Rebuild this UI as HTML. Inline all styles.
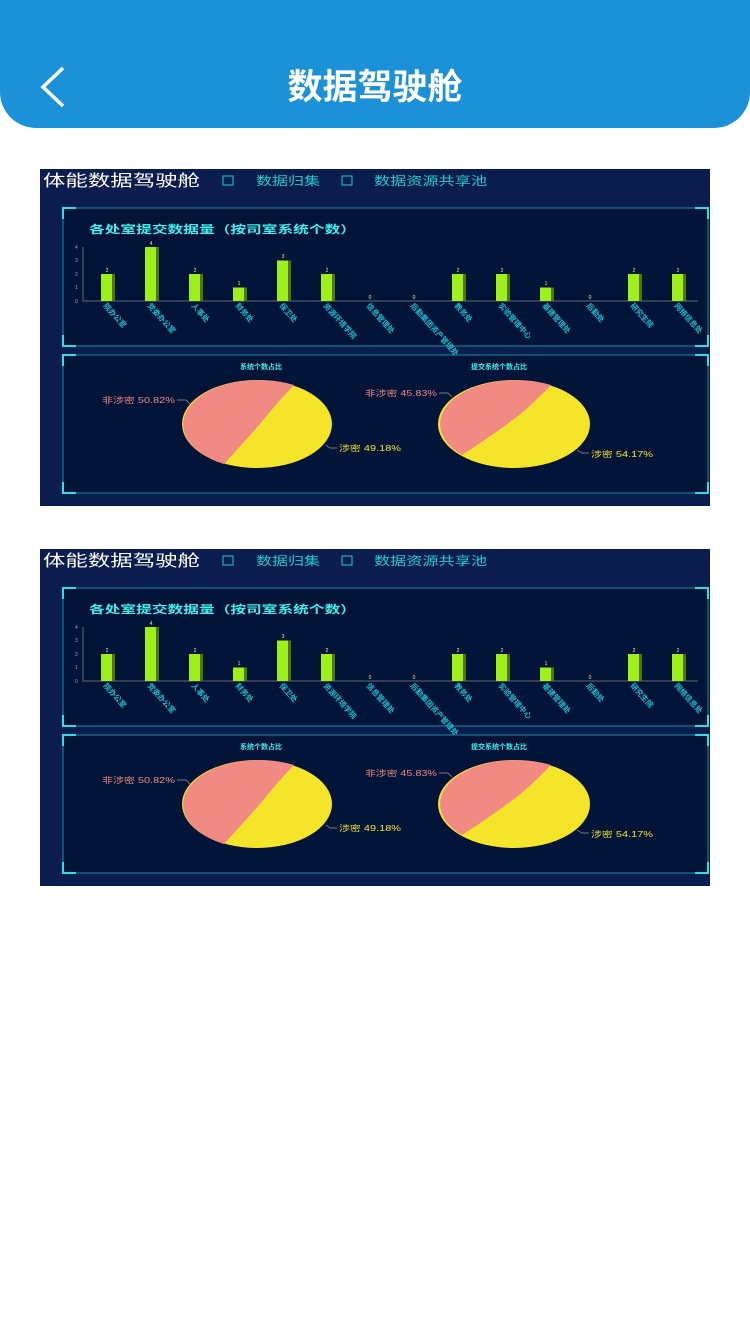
<!DOCTYPE html>
<html><head><meta charset="utf-8"><style>
body{margin:0;width:750px;height:1334px;background:#fff;position:relative;overflow:hidden;font-family:"Liberation Sans","Noto Sans CJK SC",sans-serif}
.hd{position:absolute;left:0;top:0;width:750px;height:128px;background:#1b92d8;border-radius:0 0 36px 36px}
.hd h1{position:absolute;left:0;right:0;top:64px;margin:0;text-align:center;color:#fff;font-size:35px;font-weight:bold;line-height:48px}
.img{position:absolute;left:40px;width:670px;height:337px}
svg text{font-family:"Liberation Sans","Noto Sans CJK SC",sans-serif}
</style></head><body>
<div class="hd"><svg style="position:absolute;left:36px;top:64px" width="32" height="46"><path d="M27 4 L7 23 L27 42" stroke="#fff" stroke-width="3.5" fill="none"/></svg><h1>数据驾驶舱</h1></div>

<div class="img" style="top:169px">
<svg width="670" height="337" viewBox="0 0 670 337">
<rect width="670" height="337" fill="#0a1d4e"/>
<text x="3" y="17" fill="#fff" font-size="16" textLength="157" lengthAdjust="spacingAndGlyphs">体能数据驾驶舱</text>
<rect x="183" y="7" width="10" height="9" fill="none" stroke="#2cc" stroke-width="1"/>
<text x="216" y="16" fill="#2cc" font-size="12" textLength="64" lengthAdjust="spacingAndGlyphs">数据归集</text>
<rect x="302" y="7" width="10" height="9" fill="none" stroke="#2cc" stroke-width="1"/>
<text x="334" y="16" fill="#2cc" font-size="12" textLength="113" lengthAdjust="spacingAndGlyphs">数据资源共享池</text>
<rect x="23" y="39" width="645" height="138" fill="#021438" stroke="#1a8aa0" stroke-width="1"/>
<path d="M23 50V39H36M655 39H668V50M23 166V177H36M655 177H668V166" stroke="#3dd" stroke-width="2" fill="none"/>
<text x="49" y="64" fill="#4ee" font-size="11" font-weight="bold" textLength="267" lengthAdjust="spacingAndGlyphs">各处室提交数据量（按司室系统个数）</text>
<g fill="#8ac" font-size="5"><text x="35" y="134">0</text><text x="35" y="120">1</text><text x="35" y="107">2</text><text x="35" y="93">3</text><text x="35" y="80">4</text></g>
<path d="M43 78V132H658" stroke="#667" stroke-width="1" fill="none"/>
<g fill="#9ef01a"><rect x="61" y="105" width="11" height="27"/><rect x="105" y="78" width="11" height="54"/><rect x="149" y="105" width="11" height="27"/><rect x="193" y="118.5" width="11" height="13.5"/><rect x="237" y="91.5" width="11" height="40.5"/><rect x="281" y="105" width="11" height="27"/><rect x="412" y="105" width="11" height="27"/><rect x="456" y="105" width="11" height="27"/><rect x="500" y="118.5" width="11" height="13.5"/><rect x="588" y="105" width="11" height="27"/><rect x="632" y="105" width="11" height="27"/></g>
<g fill="#4a7a10"><rect x="72" y="105" width="3" height="27"/><rect x="116" y="78" width="3" height="54"/><rect x="160" y="105" width="3" height="27"/><rect x="204" y="118.5" width="3" height="13.5"/><rect x="248" y="91.5" width="3" height="40.5"/><rect x="292" y="105" width="3" height="27"/><rect x="423" y="105" width="3" height="27"/><rect x="467" y="105" width="3" height="27"/><rect x="511" y="118.5" width="3" height="13.5"/><rect x="599" y="105" width="3" height="27"/><rect x="643" y="105" width="3" height="27"/></g>
<g fill="#cf8" font-size="5" text-anchor="middle"><text x="67" y="103">2</text><text x="111" y="76">4</text><text x="155" y="103">2</text><text x="199" y="116">1</text><text x="243" y="89">3</text><text x="287" y="103">2</text><text x="330" y="130">0</text><text x="374" y="130">0</text><text x="418" y="103">2</text><text x="462" y="103">2</text><text x="506" y="116">1</text><text x="550" y="130">0</text><text x="594" y="103">2</text><text x="638" y="103">2</text></g>
<g fill="#2bc" font-size="7.5" font-weight="bold">
<text transform="translate(63,137) rotate(48)">院办公室</text><text transform="translate(107,137) rotate(48)">党委办公室</text><text transform="translate(151,137) rotate(48)">人事处</text><text transform="translate(195,137) rotate(48)">财务处</text><text transform="translate(239,137) rotate(48)">保卫处</text><text transform="translate(283,137) rotate(48)">资源环境学院</text><text transform="translate(326,137) rotate(48)">信息管理处</text><text transform="translate(370,137) rotate(48)">后勤集团资产管理处</text><text transform="translate(414,137) rotate(48)">教务处</text><text transform="translate(458,137) rotate(48)">实验管理中心</text><text transform="translate(502,137) rotate(48)">基建管理处</text><text transform="translate(546,137) rotate(48)">后勤处</text><text transform="translate(590,137) rotate(48)">研究生院</text><text transform="translate(634,137) rotate(48)">网络信息处</text></g>
<rect x="23" y="186" width="645" height="138" fill="#021438" stroke="#1a8aa0" stroke-width="1"/>
<path d="M23 197V186H36M655 186H668V197M23 313V324H36M655 324H668V313" stroke="#3dd" stroke-width="2" fill="none"/>
<g fill="#4ee" font-size="7" font-weight="bold" text-anchor="middle"><text x="221" y="200">系统个数占比</text><text x="459" y="200">提交系统个数占比</text></g>
<ellipse cx="217" cy="255" rx="75" ry="44" fill="#f5e52a"/>
<path d="M254 216 Q235 236 220 255 Q205 272 184 295 A75 44 0 0 1 254 216Z" fill="#f28a84"/>
<ellipse cx="474" cy="255" rx="76" ry="44" fill="#f5e52a"/>
<path d="M511 216 Q490 238 474 250 Q450 268 422 286 A76 44 0 0 1 511 216Z" fill="#f28a84"/>
<g font-size="8"><text x="62" y="234" fill="#f28a84" textLength="73" lengthAdjust="spacingAndGlyphs">非涉密 50.82%</text><text x="299" y="282" fill="#f5e52a" textLength="62" lengthAdjust="spacingAndGlyphs">涉密 49.18%</text><text x="325" y="227" fill="#f28a84" textLength="72" lengthAdjust="spacingAndGlyphs">非涉密 45.83%</text><text x="551" y="288" fill="#f5e52a" textLength="62" lengthAdjust="spacingAndGlyphs">涉密 54.17%</text></g>
<path d="M137 231H146L150 235M286 276L290 279H297M399 224H408L412 228M537 281L542 284H549" stroke="#999" stroke-width="0.7" fill="none"/>
</svg></div>

<div class="img" style="top:549px">
<svg width="670" height="337" viewBox="0 0 670 337">
<rect width="670" height="337" fill="#0a1d4e"/>
<text x="3" y="17" fill="#fff" font-size="16" textLength="157" lengthAdjust="spacingAndGlyphs">体能数据驾驶舱</text>
<rect x="183" y="7" width="10" height="9" fill="none" stroke="#2cc" stroke-width="1"/>
<text x="216" y="16" fill="#2cc" font-size="12" textLength="64" lengthAdjust="spacingAndGlyphs">数据归集</text>
<rect x="302" y="7" width="10" height="9" fill="none" stroke="#2cc" stroke-width="1"/>
<text x="334" y="16" fill="#2cc" font-size="12" textLength="113" lengthAdjust="spacingAndGlyphs">数据资源共享池</text>
<rect x="23" y="39" width="645" height="138" fill="#021438" stroke="#1a8aa0" stroke-width="1"/>
<path d="M23 50V39H36M655 39H668V50M23 166V177H36M655 177H668V166" stroke="#3dd" stroke-width="2" fill="none"/>
<text x="49" y="64" fill="#4ee" font-size="11" font-weight="bold" textLength="267" lengthAdjust="spacingAndGlyphs">各处室提交数据量（按司室系统个数）</text>
<g fill="#8ac" font-size="5"><text x="35" y="134">0</text><text x="35" y="120">1</text><text x="35" y="107">2</text><text x="35" y="93">3</text><text x="35" y="80">4</text></g>
<path d="M43 78V132H658" stroke="#667" stroke-width="1" fill="none"/>
<g fill="#9ef01a"><rect x="61" y="105" width="11" height="27"/><rect x="105" y="78" width="11" height="54"/><rect x="149" y="105" width="11" height="27"/><rect x="193" y="118.5" width="11" height="13.5"/><rect x="237" y="91.5" width="11" height="40.5"/><rect x="281" y="105" width="11" height="27"/><rect x="412" y="105" width="11" height="27"/><rect x="456" y="105" width="11" height="27"/><rect x="500" y="118.5" width="11" height="13.5"/><rect x="588" y="105" width="11" height="27"/><rect x="632" y="105" width="11" height="27"/></g>
<g fill="#4a7a10"><rect x="72" y="105" width="3" height="27"/><rect x="116" y="78" width="3" height="54"/><rect x="160" y="105" width="3" height="27"/><rect x="204" y="118.5" width="3" height="13.5"/><rect x="248" y="91.5" width="3" height="40.5"/><rect x="292" y="105" width="3" height="27"/><rect x="423" y="105" width="3" height="27"/><rect x="467" y="105" width="3" height="27"/><rect x="511" y="118.5" width="3" height="13.5"/><rect x="599" y="105" width="3" height="27"/><rect x="643" y="105" width="3" height="27"/></g>
<g fill="#cf8" font-size="5" text-anchor="middle"><text x="67" y="103">2</text><text x="111" y="76">4</text><text x="155" y="103">2</text><text x="199" y="116">1</text><text x="243" y="89">3</text><text x="287" y="103">2</text><text x="330" y="130">0</text><text x="374" y="130">0</text><text x="418" y="103">2</text><text x="462" y="103">2</text><text x="506" y="116">1</text><text x="550" y="130">0</text><text x="594" y="103">2</text><text x="638" y="103">2</text></g>
<g fill="#2bc" font-size="7.5" font-weight="bold">
<text transform="translate(63,137) rotate(48)">院办公室</text><text transform="translate(107,137) rotate(48)">党委办公室</text><text transform="translate(151,137) rotate(48)">人事处</text><text transform="translate(195,137) rotate(48)">财务处</text><text transform="translate(239,137) rotate(48)">保卫处</text><text transform="translate(283,137) rotate(48)">资源环境学院</text><text transform="translate(326,137) rotate(48)">信息管理处</text><text transform="translate(370,137) rotate(48)">后勤集团资产管理处</text><text transform="translate(414,137) rotate(48)">教务处</text><text transform="translate(458,137) rotate(48)">实验管理中心</text><text transform="translate(502,137) rotate(48)">基建管理处</text><text transform="translate(546,137) rotate(48)">后勤处</text><text transform="translate(590,137) rotate(48)">研究生院</text><text transform="translate(634,137) rotate(48)">网络信息处</text></g>
<rect x="23" y="186" width="645" height="138" fill="#021438" stroke="#1a8aa0" stroke-width="1"/>
<path d="M23 197V186H36M655 186H668V197M23 313V324H36M655 324H668V313" stroke="#3dd" stroke-width="2" fill="none"/>
<g fill="#4ee" font-size="7" font-weight="bold" text-anchor="middle"><text x="221" y="200">系统个数占比</text><text x="459" y="200">提交系统个数占比</text></g>
<ellipse cx="217" cy="255" rx="75" ry="44" fill="#f5e52a"/>
<path d="M254 216 Q235 236 220 255 Q205 272 184 295 A75 44 0 0 1 254 216Z" fill="#f28a84"/>
<ellipse cx="474" cy="255" rx="76" ry="44" fill="#f5e52a"/>
<path d="M511 216 Q490 238 474 250 Q450 268 422 286 A76 44 0 0 1 511 216Z" fill="#f28a84"/>
<g font-size="8"><text x="62" y="234" fill="#f28a84" textLength="73" lengthAdjust="spacingAndGlyphs">非涉密 50.82%</text><text x="299" y="282" fill="#f5e52a" textLength="62" lengthAdjust="spacingAndGlyphs">涉密 49.18%</text><text x="325" y="227" fill="#f28a84" textLength="72" lengthAdjust="spacingAndGlyphs">非涉密 45.83%</text><text x="551" y="288" fill="#f5e52a" textLength="62" lengthAdjust="spacingAndGlyphs">涉密 54.17%</text></g>
<path d="M137 231H146L150 235M286 276L290 279H297M399 224H408L412 228M537 281L542 284H549" stroke="#999" stroke-width="0.7" fill="none"/>
</svg></div>
</body></html>
